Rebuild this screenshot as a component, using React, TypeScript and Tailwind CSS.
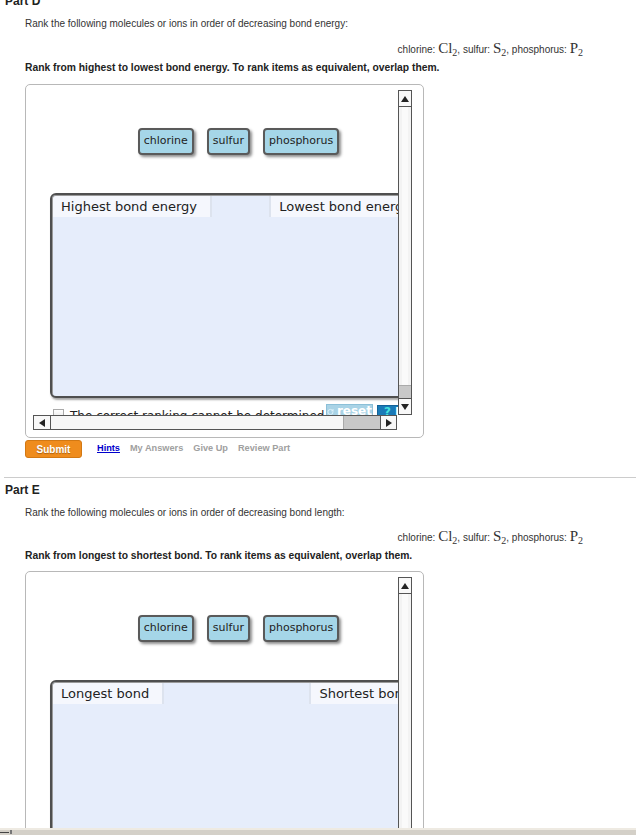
import { RotateCw } from 'lucide-react';

const chips = ['chlorine', 'sulfur', 'phosphorus'];

function Up() {
  return (
    <svg width="8" height="6" viewBox="0 0 8 6">
      <polygon points="4,0 8,6 0,6" fill="#222" />
    </svg>
  );
}

function Down() {
  return (
    <svg width="8" height="6" viewBox="0 0 8 6">
      <polygon points="0,0 8,0 4,6" fill="#222" />
    </svg>
  );
}

function Left() {
  return (
    <svg width="6" height="8" viewBox="0 0 6 8">
      <polygon points="6,0 6,8 0,4" fill="#222" />
    </svg>
  );
}

function Right() {
  return (
    <svg width="6" height="8" viewBox="0 0 6 8">
      <polygon points="0,0 6,4 0,8" fill="#222" />
    </svg>
  );
}

function Formula() {
  const sub = 'text-[10px] leading-none relative top-[3px]';
  const math = "font-['Liberation_Serif',serif] text-[15px] leading-none";
  return (
    <p className="h-[14px] text-right pr-[53px] text-[10px] leading-[14px] text-[#333]">
      chlorine: <span className={math}>Cl<span className={sub}>2</span></span>, sulfur:{' '}
      <span className={math}>S<span className={sub}>2</span></span>, phosphorus:{' '}
      <span className={math}>P<span className={sub}>2</span></span>
    </p>
  );
}

function RankPanel({ left, right }: { left: string; right: string }) {
  return (
    <div className="ml-[25px] w-[399px] h-[354px] shrink-0 border border-[#b8b8b8] rounded-[5px] pl-[7px] pt-[5px] pr-[11px] pb-[7px] grid grid-cols-[365px_14px] grid-rows-[325px_15px]">
      {/* scrolled content */}
      <div className="overflow-hidden">
        <div className="w-[411px] flex flex-col">
          <div className="mt-[38px] flex justify-center gap-[13px]">
            {chips.map((c) => (
              <div
                key={c}
                className="h-[27px] px-[4px] flex items-center border-2 border-[#5a5a5a] rounded-[4px] bg-[#a5d6e8] shadow-[2px_2px_3px_rgba(0,0,0,0.45)] font-['DejaVu_Sans',sans-serif] text-[11px] text-[#222]"
              >
                {c}
              </div>
            ))}
          </div>

          <div className="mt-[38px] ml-[17px] w-[377px] h-[205px] border-2 border-[#4f4f4f] rounded-[6px] bg-[#e6edfb] shadow-[inset_1px_1px_0_#9a9a9a,1px_2px_2px_rgba(0,0,0,0.35)] p-[1px] flex items-start justify-between font-['DejaVu_Sans',sans-serif] text-[13px] text-[#222]">
            <div className="h-[21px] pl-[8px] pr-[13px] flex items-center bg-[#f5f7fd] border-r-2 border-[#dde3ee] rounded-tl-[3px]">
              {left}
            </div>
            <div className="h-[21px] pl-[8px] pr-[13px] flex items-center bg-[#f5f7fd] border-l-2 border-[#dde3ee] whitespace-nowrap">
              {right}
            </div>
          </div>

          <div className="mt-[6px] ml-[17px] w-[377px] h-[20px] flex items-start font-['DejaVu_Sans',sans-serif] text-[12px] text-[#222]">
            <div className="shrink-0 mt-[5px] ml-[3px] w-[11px] h-[11px] border border-[#aaa] bg-gradient-to-b from-white to-[#e6e6e6]" />
            <span className="mt-[3px] ml-[6px] leading-[18px] whitespace-nowrap">The correct ranking cannot be determined</span>
            <div className="flex-1" />
            <div className="shrink-0 w-[47px] h-[20px] bg-[#a9d3e6] border border-[#8cc0d8] flex items-start justify-center gap-[3px] text-white font-bold text-[12px] leading-[13px]">
              <RotateCw size={10} strokeWidth={3} className="mt-[2px] text-[#e3f4fb]" />
              reset
            </div>
            <div className="shrink-0 ml-[4px] mt-[1px] w-[50px] h-[20px] bg-[#1a7ab7] border border-[#126399] flex items-start pl-[6px] gap-[4px] text-[12px] leading-[13px] font-bold">
              <span className="text-[#46e3dd]">?</span>
              <span className="text-white">Help</span>
            </div>
          </div>
        </div>
      </div>

      {/* vertical scrollbar */}
      <div className="flex flex-col border border-[#555] bg-[#f3f3f3]">
        <div className="h-[16px] shrink-0 border-b border-[#555] bg-[#f8f8f8] flex items-center justify-center">
          <Up />
        </div>
        <div className="flex-1 flex justify-center">
          <div className="w-[6px] h-full bg-[#fafafa]" />
        </div>
        <div className="h-[13px] shrink-0 border-t border-[#aaa] bg-[#c8c8c8]" />
        <div className="h-[16px] shrink-0 border-t border-[#555] bg-[#f8f8f8] flex items-center justify-center">
          <Down />
        </div>
      </div>

      {/* horizontal scrollbar */}
      <div className="flex border border-[#555] bg-[#f7f7f7] mr-[1px]">
        <div className="w-[17px] shrink-0 border-r border-[#555] bg-[#f8f8f8] flex items-center justify-center">
          <Left />
        </div>
        <div className="flex-1" />
        <div className="w-[37px] shrink-0 border-l border-[#aaa] bg-[#c8c8c8]" />
        <div className="w-[16px] shrink-0 border-l border-[#555] bg-[#f8f8f8] flex items-center justify-center">
          <Right />
        </div>
      </div>
      <div className="bg-white" />
    </div>
  );
}

export default function App() {
  return (
    <div className="relative w-[636px] h-[835px] overflow-hidden bg-white font-['Liberation_Sans',Arial,sans-serif] text-[#333]">
      {/* Part D */}
      <section className="flex flex-col">
        <h2 className="-mt-[6px] pl-[5px] text-[12px] leading-[15px] font-bold text-[#222]">Part D</h2>
        <p className="mt-[9px] pl-[25px] text-[10px] leading-[12px]">
          Rank the following molecules or ions in order of decreasing bond energy:
        </p>
        <div className="mt-[11px]">
          <Formula />
        </div>
        <p className="mt-[7px] pl-[25px] text-[10.3px] leading-[12px] font-bold text-[#222]">
          Rank from highest to lowest bond energy. To rank items as equivalent, overlap them.
        </p>
        <div className="mt-[10px]">
          <RankPanel left="Highest bond energy" right="Lowest bond energy" />
        </div>
        <div className="mt-[2px] pl-[25px] flex items-center gap-[10px] text-[9.2px] font-bold">
          <button className="w-[57px] h-[18px] rounded-[3px] bg-[#ef8c1d] border border-[#d27813] text-white text-[10px] font-bold [text-shadow:0_1px_1px_rgba(0,0,0,0.3)]">
            Submit
          </button>
          <a className="ml-[5px] text-[#0000cc] underline">Hints</a>
          <span className="text-[#a0a0a0]">My Answers</span>
          <span className="text-[#a0a0a0]">Give Up</span>
          <span className="text-[#a0a0a0]">Review Part</span>
        </div>
      </section>

      <div className="mt-[19px] ml-[4px] border-t border-[#ccc]" />

      {/* Part E */}
      <section className="flex flex-col">
        <h2 className="mt-[5px] pl-[5px] text-[12px] leading-[15px] font-bold text-[#222]">Part E</h2>
        <p className="mt-[9px] pl-[25px] text-[10px] leading-[12px]">
          Rank the following molecules or ions in order of decreasing bond length:
        </p>
        <div className="mt-[10px]">
          <Formula />
        </div>
        <p className="mt-[7px] pl-[25px] text-[10.3px] leading-[12px] font-bold text-[#222]">
          Rank from longest to shortest bond. To rank items as equivalent, overlap them.
        </p>
        <div className="mt-[9px]">
          <RankPanel left="Longest bond" right="Shortest bond" />
        </div>
      </section>

      {/* window status bar */}
      <div className="absolute left-0 right-0 bottom-0 h-[7px] border-t-2 border-[#eeeae2] bg-[#d4d0c8]">
        <div className="absolute left-0 top-[2px] w-[9px] h-[1px] bg-[#444]" />
        <div className="absolute left-[10px] top-0 w-[2px] h-[4px] bg-[#777]" />
      </div>
    </div>
  );
}
